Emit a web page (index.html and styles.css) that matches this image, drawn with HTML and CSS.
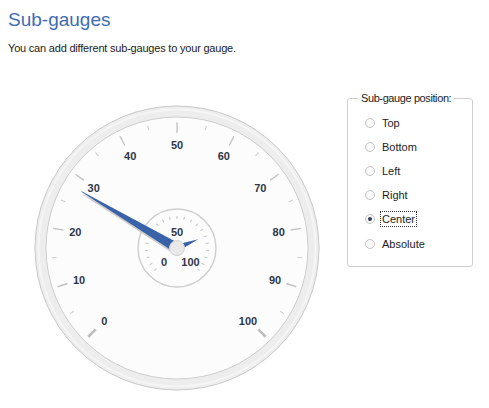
FILE: index.html
```html
<!DOCTYPE html>
<html>
<head>
<meta charset="utf-8">
<link rel="stylesheet" href="styles.css">
</head>
<body>
<header class="head">
  <h1 class="title">Sub-gauges</h1>
  <p class="intro">You can add different sub-gauges to your gauge.</p>
</header>
<main class="row">
  <svg class="gauge" width="300" height="300" viewBox="0 0 300 300">
    <circle cx="150" cy="150" r="142" fill="#ededed" stroke="#c9c9c9" stroke-width="1"/>
    <circle cx="150" cy="150" r="138.5" fill="none" stroke="#f5f5f5" stroke-width="2"/>
    <circle cx="150" cy="150" r="131" fill="#fcfcfc" stroke="#cdcdcd" stroke-width="1"/>
    <g class="minor">
      <line x1="150" y1="24.5" x2="150" y2="29" transform="rotate(-121.5 150 150)"/>
      <line x1="150" y1="24.5" x2="150" y2="29" transform="rotate(-94.5 150 150)"/>
      <line x1="150" y1="24.5" x2="150" y2="29" transform="rotate(-67.5 150 150)"/>
      <line x1="150" y1="24.5" x2="150" y2="29" transform="rotate(-40.5 150 150)"/>
      <line x1="150" y1="24.5" x2="150" y2="29" transform="rotate(-13.5 150 150)"/>
      <line x1="150" y1="24.5" x2="150" y2="29" transform="rotate(13.5 150 150)"/>
      <line x1="150" y1="24.5" x2="150" y2="29" transform="rotate(40.5 150 150)"/>
      <line x1="150" y1="24.5" x2="150" y2="29" transform="rotate(67.5 150 150)"/>
      <line x1="150" y1="24.5" x2="150" y2="29" transform="rotate(94.5 150 150)"/>
      <line x1="150" y1="24.5" x2="150" y2="29" transform="rotate(121.5 150 150)"/>
    </g>
    <g class="major">
      <line class="end" x1="150" y1="24.5" x2="150" y2="35" transform="rotate(-135 150 150)"/>
      <line x1="150" y1="24.5" x2="150" y2="35" transform="rotate(-108 150 150)"/>
      <line x1="150" y1="24.5" x2="150" y2="35" transform="rotate(-81 150 150)"/>
      <line x1="150" y1="24.5" x2="150" y2="35" transform="rotate(-54 150 150)"/>
      <line x1="150" y1="24.5" x2="150" y2="35" transform="rotate(-27 150 150)"/>
      <line x1="150" y1="24.5" x2="150" y2="35" transform="rotate(0 150 150)"/>
      <line x1="150" y1="24.5" x2="150" y2="35" transform="rotate(27 150 150)"/>
      <line x1="150" y1="24.5" x2="150" y2="35" transform="rotate(54 150 150)"/>
      <line x1="150" y1="24.5" x2="150" y2="35" transform="rotate(81 150 150)"/>
      <line x1="150" y1="24.5" x2="150" y2="35" transform="rotate(108 150 150)"/>
      <line class="end" x1="150" y1="24.5" x2="150" y2="35" transform="rotate(135 150 150)"/>
    </g>
    <g class="labels">
      <text x="77.2" y="226.8">0</text>
      <text x="52" y="185.8">10</text>
      <text x="48.3" y="137.9">20</text>
      <text x="66.7" y="93.5">30</text>
      <text x="103.2" y="62.2">40</text>
      <text x="150" y="51">50</text>
      <text x="196.8" y="62.2">60</text>
      <text x="233.3" y="93.5">70</text>
      <text x="251.7" y="137.9">80</text>
      <text x="248" y="185.8">90</text>
      <text x="221" y="226.8">100</text>
    </g>
    <circle cx="150" cy="150" r="39" fill="#fcfcfc" stroke="#cfcfcf" stroke-width="1.5"/>
    <g class="subticks">
      <line x1="150" y1="118" x2="150" y2="121" transform="rotate(-135 150 150)"/>
      <line x1="150" y1="118" x2="150" y2="121" transform="rotate(-121.5 150 150)"/>
      <line x1="150" y1="118" x2="150" y2="121" transform="rotate(-108 150 150)"/>
      <line x1="150" y1="118" x2="150" y2="121" transform="rotate(-94.5 150 150)"/>
      <line x1="150" y1="118" x2="150" y2="121" transform="rotate(-81 150 150)"/>
      <line x1="150" y1="118" x2="150" y2="121" transform="rotate(-67.5 150 150)"/>
      <line x1="150" y1="118" x2="150" y2="121" transform="rotate(-54 150 150)"/>
      <line x1="150" y1="118" x2="150" y2="121" transform="rotate(-40.5 150 150)"/>
      <line x1="150" y1="118" x2="150" y2="121" transform="rotate(-27 150 150)"/>
      <line x1="150" y1="118" x2="150" y2="121" transform="rotate(-13.5 150 150)"/>
      <line x1="150" y1="118" x2="150" y2="121" transform="rotate(0 150 150)"/>
      <line x1="150" y1="118" x2="150" y2="121" transform="rotate(13.5 150 150)"/>
      <line x1="150" y1="118" x2="150" y2="121" transform="rotate(27 150 150)"/>
      <line x1="150" y1="118" x2="150" y2="121" transform="rotate(40.5 150 150)"/>
      <line x1="150" y1="118" x2="150" y2="121" transform="rotate(54 150 150)"/>
      <line x1="150" y1="118" x2="150" y2="121" transform="rotate(67.5 150 150)"/>
      <line x1="150" y1="118" x2="150" y2="121" transform="rotate(81 150 150)"/>
      <line x1="150" y1="118" x2="150" y2="121" transform="rotate(94.5 150 150)"/>
      <line x1="150" y1="118" x2="150" y2="121" transform="rotate(108 150 150)"/>
      <line x1="150" y1="118" x2="150" y2="121" transform="rotate(121.5 150 150)"/>
      <line x1="150" y1="118" x2="150" y2="121" transform="rotate(135 150 150)"/>
    </g>
    <g class="labels">
      <text x="150" y="137.5">50</text>
      <text x="137" y="167.5">0</text>
      <text x="163.5" y="167.5">100</text>
    </g>
    <polygon class="shadow" points="149.6,39 150.4,39 155,150 145,150" transform="translate(1.5 3) rotate(-59.4 150 150)"/>
    <polygon class="needle" points="149.6,39 150.4,39 155,150 145,150" transform="rotate(-59.4 150 150)"/>
    <polygon class="needle" points="150,127 153.5,150 146.5,150" transform="rotate(67.5 150 150)"/>
    <circle cx="150" cy="150" r="7.5" fill="#e9e9e9" stroke="#d2d2d2" stroke-width="1"/>
  </svg>
  <fieldset class="group">
    <legend class="legend">Sub-gauge position:</legend>
    <ul class="options">
      <li class="option"><span class="radio"></span><span class="label">Top</span></li>
      <li class="option"><span class="radio"></span><span class="label">Bottom</span></li>
      <li class="option"><span class="radio"></span><span class="label">Left</span></li>
      <li class="option"><span class="radio"></span><span class="label">Right</span></li>
      <li class="option"><span class="radio checked"></span><span class="label focus">Center</span></li>
      <li class="option"><span class="radio"></span><span class="label">Absolute</span></li>
    </ul>
  </fieldset>
</main>
</body>
</html>
```
FILE: styles.css
```css
html, body {
  margin: 0;
  padding: 0;
  background: #ffffff;
}
body {
  width: 489px;
  height: 408px;
  overflow: hidden;
  font-family: "Liberation Sans", Arial, sans-serif;
  color: #222;
}
.head {
  padding: 8px 0 0 8px;
}
.title {
  margin: 0;
  font-size: 19px;
  line-height: 24px;
  font-weight: normal;
  color: #3d6cb4;
}
.intro {
  margin: 9px 0 0 0;
  font-size: 11px;
  line-height: 14px;
  letter-spacing: -0.2px;
  color: #222;
}
.row {
  display: flex;
  align-items: flex-start;
  margin-top: 37px;
  padding-left: 27px;
}
.gauge {
  display: block;
  margin-top: 6px;
  flex: none;
}
.minor line {
  stroke: #c9c9c9;
  stroke-width: 1;
}
.major line {
  stroke: #c4c4c4;
  stroke-width: 1.4;
}
.major line.end {
  stroke: #bdbdbd;
  stroke-width: 2.6;
}
.subticks line {
  stroke: #c4c4c4;
  stroke-width: 1;
}
.labels text {
  font-family: "Liberation Sans", Arial, sans-serif;
  font-size: 11px;
  font-weight: bold;
  fill: #2e3748;
  text-anchor: middle;
}
.needle {
  fill: #3a62a8;
}
.shadow {
  fill: #bdbdbd;
  opacity: 0.8;
}
.group {
  box-sizing: border-box;
  margin: 0 0 0 20px;
  padding: 0;
  width: 126px;
  height: 175px;
  border: 1px solid #cfcfcf;
  border-radius: 3px;
  flex: none;
}
.legend {
  margin-left: 10px;
  padding: 0 3px;
  font-size: 11px;
  line-height: 13px;
  letter-spacing: -0.4px;
  color: #222;
}
.options {
  list-style: none;
  margin: 0;
  padding: 5.5px 0 0 17px;
}
.option {
  display: flex;
  align-items: center;
  height: 24.2px;
  font-size: 11px;
  color: #222;
}
.radio {
  box-sizing: border-box;
  width: 10px;
  height: 10px;
  border: 1px solid #c6c6c6;
  border-radius: 50%;
  background: #fafafa;
  margin-right: 5px;
  display: flex;
  align-items: center;
  justify-content: center;
}
.radio.checked::after {
  content: "";
  width: 4px;
  height: 4px;
  border-radius: 50%;
  background: #2f3b5c;
}
.label {
  line-height: 14px;
  padding: 0 1px;
  border: 1px dotted transparent;
}
.label.focus {
  border-color: #333;
}
```
